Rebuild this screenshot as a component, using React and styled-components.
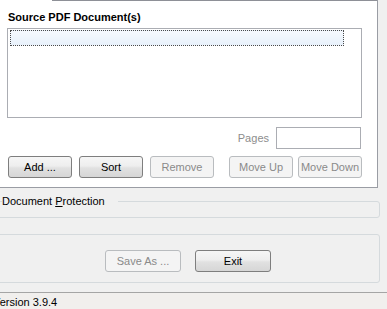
import React from "react";
import styled, { createGlobalStyle } from "styled-components";

const Global = createGlobalStyle`
  html, body { margin: 0; padding: 0; background: #f0f0f0; }
  body { font-family: "Liberation Sans", Arial, sans-serif; font-size: 11px; color: #000; }
`;

const Window = styled.div`
  width: 387px;
  height: 309px;
  overflow: hidden;
  display: flex;
  flex-direction: column;
  background: #f0f0f0;
`;

const TabPage = styled.div`
  width: 378px;
  height: 188px;
  flex-shrink: 0;
  box-sizing: border-box;
  background: #fff;
  border-right: 1px solid #9a9da4;
  border-bottom: 1px solid #9a9da4;
  display: flex;
  flex-direction: column;
`;

const TabEdge = styled.div`
  display: flex;
  height: 1px;
  flex-shrink: 0;
`;

const TabJoin = styled.div`
  width: 52px;
  background: #fff;
`;

const TabLine = styled.div`
  flex: 1;
  background: #8e9097;
`;

const PageBody = styled.div`
  padding: 10px 15px 0 7px;
  display: flex;
  flex-direction: column;
`;

const Title = styled.div`
  font-weight: bold;
  line-height: 13px;
  margin-left: 1px;
`;

const ListBox = styled.div`
  margin-top: 4px;
  height: 90px;
  box-sizing: border-box;
  border: 1px solid #abadb3;
  background: #fff;
`;

const ListItem = styled.div`
  margin: 1px 17px 0 2px;
  height: 16px;
  box-sizing: border-box;
  border: 1px dotted #4a4a4a;
  background: linear-gradient(#f5f9fe, #e8f1fb);
`;

const PagesRow = styled.div`
  margin-top: 9px;
  display: flex;
  justify-content: flex-end;
  align-items: center;
  gap: 7px;
  padding-right: 1px;
`;

const Label = styled.span`
  color: #8d8d8d;
  line-height: 13px;
`;

const TextBox = styled.div`
  width: 85px;
  height: 22px;
  box-sizing: border-box;
  border: 1px solid #abadb3;
  background: #fff;
`;

const ButtonRow = styled.div`
  margin-top: 7px;
  display: flex;
  justify-content: space-between;
  padding-left: 1px;
`;

const ButtonGroup = styled.div`
  display: flex;
  gap: ${(p) => p.$gap}px;
`;

const Button = styled.button`
  width: ${(p) => p.$w}px;
  height: 22px;
  box-sizing: border-box;
  padding: 0;
  border-radius: 3px;
  font-family: "Liberation Sans", Arial, sans-serif;
  font-size: 11px;
  border: 1px solid ${(p) => (p.disabled ? "#b9bcbf" : "#7e7e7e")};
  background: ${(p) =>
    p.disabled
      ? "#f4f4f4"
      : "linear-gradient(#f6f6f6 0%, #eeeeee 45%, #e1e1e1 55%, #d6d6d6 100%)"};
  color: ${(p) => (p.disabled ? "#8a8a8a" : "#000")};
`;

const GroupBox = styled.fieldset`
  margin: ${(p) => p.$top}px 0 0 -4px;
  width: 384px;
  box-sizing: border-box;
  border: 1px solid #d5dadd;
  border-radius: 3px;
  padding: ${(p) => p.$pad};
  min-inline-size: 0;
  flex-shrink: 0;
`;

const Legend = styled.legend`
  padding: 0 13px 0 0;
  line-height: 13px;
  font-size: 11px;
`;

const DialogButtons = styled.div`
  display: flex;
  justify-content: center;
  gap: 14px;
`;

const StatusBar = styled.div`
  margin-top: 9px;
  flex: 1;
  border-top: 1px solid #a5a5a5;
  background: #f1efed;
  padding-top: 3px;
  overflow: hidden;
`;

const StatusText = styled.div`
  margin-left: -7px;
  line-height: 13px;
  white-space: nowrap;
`;

export default function App() {
  return (
    <>
      <Global />
      <Window>
        <TabPage>
          <TabEdge>
            <TabJoin />
            <TabLine />
          </TabEdge>
          <PageBody>
            <Title>Source PDF Document(s)</Title>
            <ListBox>
              <ListItem />
            </ListBox>
            <PagesRow>
              <Label>
                Pa<u>g</u>es
              </Label>
              <TextBox />
            </PagesRow>
            <ButtonRow>
              <ButtonGroup $gap={7}>
                <Button $w={64}>Add ...</Button>
                <Button $w={64}>Sort</Button>
                <Button $w={64} disabled>
                  Remove
                </Button>
              </ButtonGroup>
              <ButtonGroup $gap={5}>
                <Button $w={64} disabled>
                  Move Up
                </Button>
                <Button $w={64} disabled>
                  Move Down
                </Button>
              </ButtonGroup>
            </ButtonRow>
          </PageBody>
        </TabPage>
        <GroupBox $top={7} $pad="0 0 9px 5px">
          <Legend>
            Document <u>P</u>rotection
          </Legend>
        </GroupBox>
        <GroupBox $top={16} $pad="15px 0 10px 0">
          <DialogButtons>
            <Button $w={76} disabled>
              Save As ...
            </Button>
            <Button $w={76}>Exit</Button>
          </DialogButtons>
        </GroupBox>
        <StatusBar>
          <StatusText>Version 3.9.4</StatusText>
        </StatusBar>
      </Window>
    </>
  );
}
